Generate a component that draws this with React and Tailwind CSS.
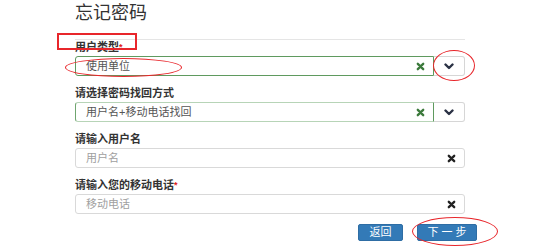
const ClearIcon = ({ color }) => (
  <svg width="9" height="9" viewBox="0 0 10 10" className="shrink-0">
    <path d="M2 2 L8 8 M8 2 L2 8" stroke={color} strokeWidth="2.6" strokeLinecap="round" />
  </svg>
);

const Chevron = () => (
  <svg width="10" height="7" viewBox="0 0 10 7">
    <polyline points="1.5,1.5 5,5 8.5,1.5" fill="none" stroke="#2b3245" strokeWidth="2.4" strokeLinecap="round" strokeLinejoin="round" />
  </svg>
);

const Label = ({ text, required, first }) => (
  <div className={`h-[14px] text-[11px] leading-[14px] font-bold text-[#333] ${first ? "" : "mt-[10px]"}`}>
    {text}
    {required && <span className="text-[#e02020] text-[9px] align-top">*</span>}
  </div>
);

const SelectRow = ({ value, strong }) => (
  <div className="mt-[2px] flex h-[20px]">
    <div
      className={`flex-1 flex items-center justify-between pl-[10px] pr-[8px] rounded-l-[3px] border ${
        strong ? "border-[#5f9a5f]" : "border-[#b7d4b7] border-l-[#6fa56f] border-r-[#5f9a5f]"
      }`}
    >
      <span className="text-[11px] text-[#555]">{value}</span>
      <ClearIcon color="#3c7a3c" />
    </div>
    <div className="w-[31px] flex items-center justify-center border border-l-0 border-[#d6d6d6] rounded-r-[3px]">
      <Chevron />
    </div>
  </div>
);

const TextRow = ({ placeholder }) => (
  <div className="mt-[2px] flex h-[20px] items-center justify-between pl-[10px] pr-[8px] border border-[#d9d9d9] rounded-[3px]">
    <span className="text-[11px] text-[#a0a0a0]">{placeholder}</span>
    <ClearIcon color="#222" />
  </div>
);

export default function App() {
  return (
    <div
      className="relative w-[557px] h-[250px] bg-white overflow-hidden"
      style={{ fontFamily: '"Liberation Sans", "Noto Sans CJK SC", sans-serif' }}
    >
      <div className="ml-[75px] w-[390px]">
        <div className="h-[40px] pt-[2px] border-b border-[#e5e5e5]">
          <h2 className="text-[18px] leading-[22px] text-[#333]">忘记密码</h2>
        </div>

        <Label text="用户类型" required first />
        <SelectRow value="使用单位" strong />

        <Label text="请选择密码找回方式" />
        <SelectRow value="用户名+移动电话找回" />

        <Label text="请输入用户名" />
        <TextRow placeholder="用户名" />

        <Label text="请输入您的移动电话" required />
        <TextRow placeholder="移动电话" />
      </div>

      <div className="mt-[10px] w-[477px] flex justify-end gap-[14px]">
        <button className="w-[45px] h-[17px] bg-[#337ab7] border border-[#2e6da4] rounded-[2px] text-white text-[11px] leading-[15px]">
          返回
        </button>
        <button className="w-[60px] h-[17px] bg-[#337ab7] border border-[#2e6da4] rounded-[2px] text-white text-[11px] leading-[15px]">
          下 一 步
        </button>
      </div>

      {/* red annotation marks */}
      <div className="absolute left-[57px] top-[33px] w-[80px] h-[17px] border-2 border-[#e8262b]" />
      <div className="absolute left-[65px] top-[58px] w-[117px] h-[19px] rounded-[50%] border-[1.5px] border-[#e8262b]" />
      <div className="absolute left-[433px] top-[50px] w-[42px] h-[31px] rounded-[50%] border-[1.5px] border-[#e8262b]" />
      <div className="absolute left-[412px] top-[217px] w-[86px] h-[29px] rounded-[50%] border-[1.5px] border-[#e8262b]" />
    </div>
  );
}
